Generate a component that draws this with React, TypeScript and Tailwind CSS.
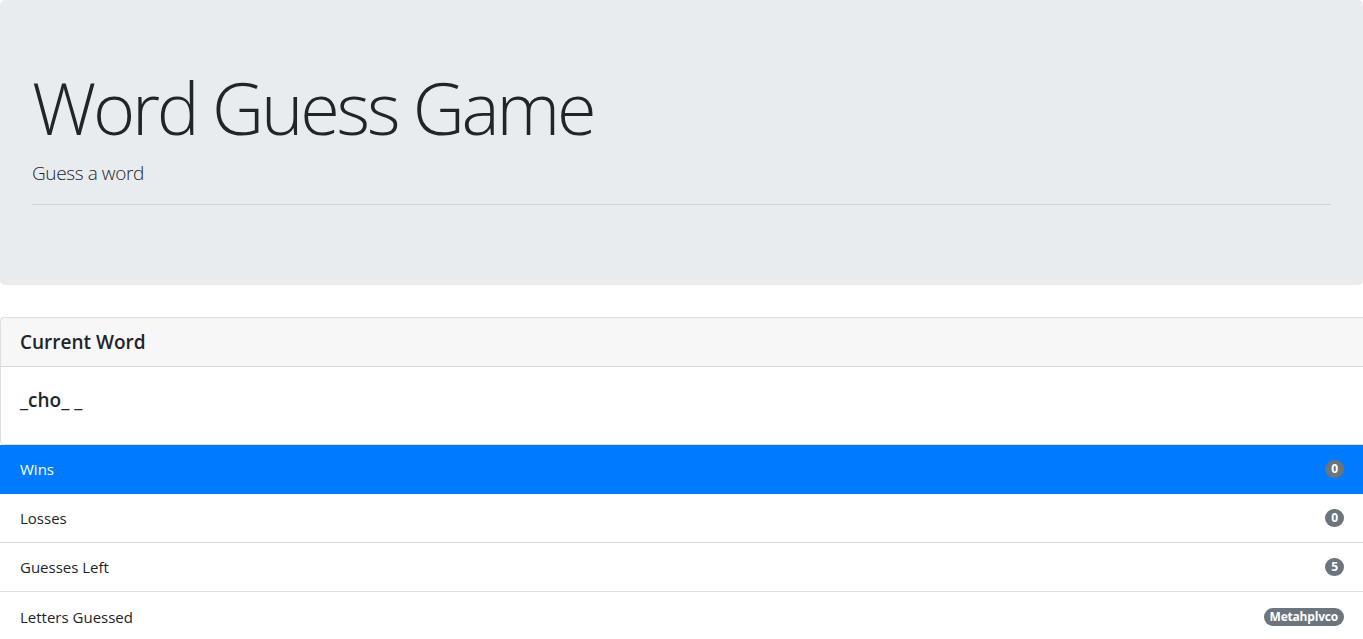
const items: { label: string; value: string; active?: boolean }[] = [
  { label: "Wins", value: "0", active: true },
  { label: "Losses", value: "0" },
  { label: "Guesses Left", value: "5" },
  { label: "Letters Guessed", value: "Metahplvco" },
];

export default function App() {
  return (
    <div className="min-h-screen overflow-hidden bg-white font-['Open_Sans','Noto_Sans',sans-serif] text-[#212529]">
      <div className="mb-8 rounded-[5px] bg-[#e9ecef] px-8 py-16">
        <h1 className="text-[72px] font-light leading-[1.2] tracking-[-3.2px]">
          Word Guess Game
        </h1>
        <p className="mt-2 text-[19px] font-light leading-[30px] tracking-[-0.4px]">
          Guess a word
        </p>
        <hr className="my-4 border-t border-black/10" />
      </div>

      <div className="mr-[-4px] rounded-[4px] border border-black/[0.125]">
        <div className="border-b border-black/[0.125] bg-black/[0.03] pl-[19px] pr-5 py-3">
          <h5 className="text-[19px] font-semibold leading-6">Current Word</h5>
        </div>
        <div className="h-[77px] pl-[19px] pt-[21px]">
          <h5 className="text-[19px] font-semibold leading-6">_cho_ _</h5>
        </div>
      </div>

      <ul>
        {items.map((it, i) => (
          <li
            key={it.label}
            className={
              it.active
                ? "flex h-[49px] items-center justify-between border-b border-[#007bff] bg-[#007bff] pl-5 pr-[19px] text-[15px] text-white"
                : "flex h-[49px] items-center justify-between pl-5 pr-[19px] text-[15px]" +
                  (i < items.length - 1 ? " border-b border-black/[0.125]" : "")
            }
          >
            <span>{it.label}</span>
            <span className="rounded-full bg-[#6c757d] px-[6px] py-[2px] text-[12px] font-bold leading-[14px] tracking-[-0.2px] text-white">
              {it.value}
            </span>
          </li>
        ))}
      </ul>
    </div>
  );
}
